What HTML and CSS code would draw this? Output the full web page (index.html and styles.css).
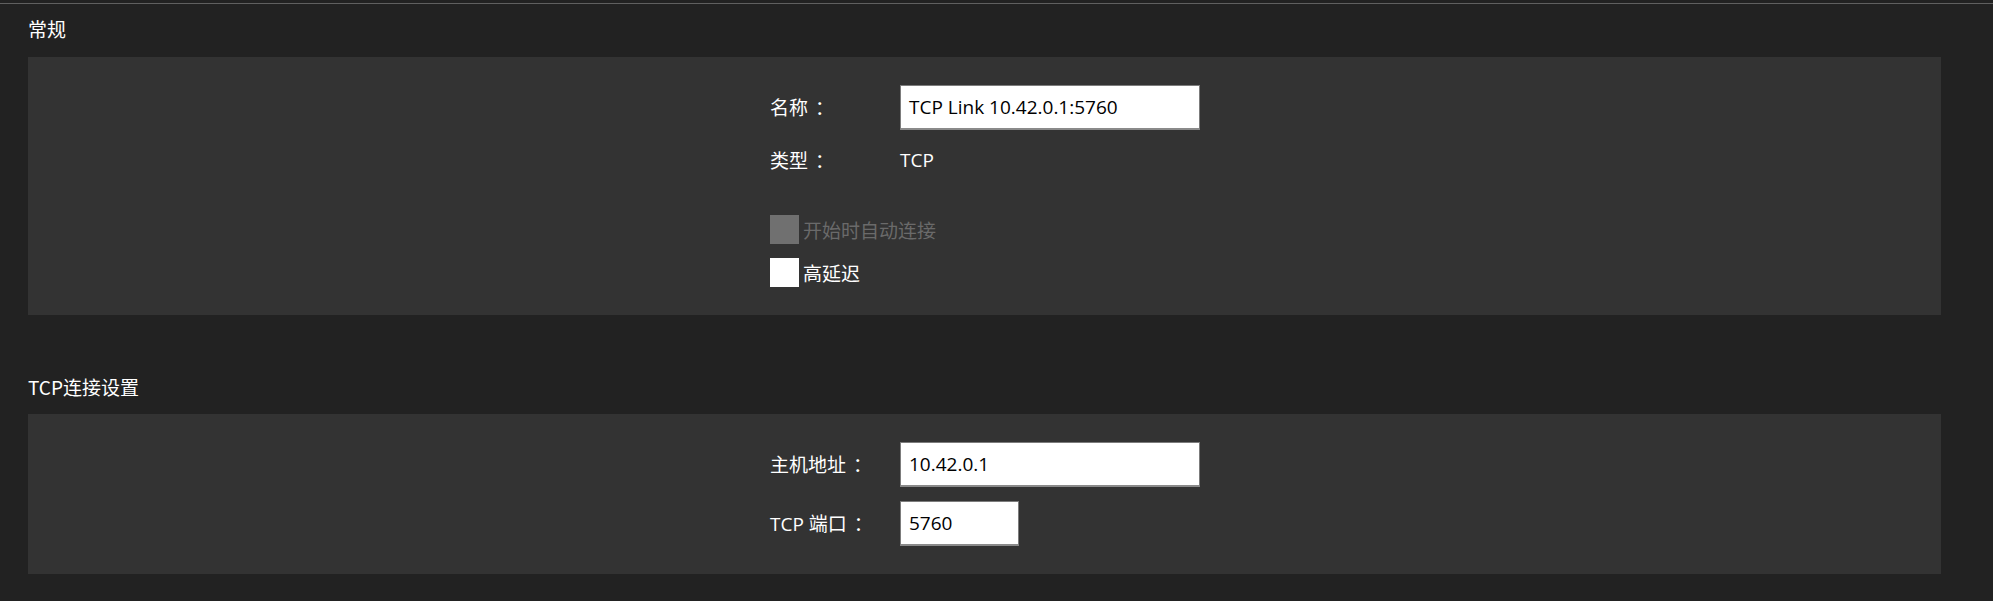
FILE: index.html
```html
<!DOCTYPE html>
<html lang="zh-CN">
<head>
<meta charset="utf-8">
<title>TCP Link</title>
<link rel="stylesheet" href="styles.css">
</head>
<body>
<div class="topbar"></div>
<div class="content">
  <div class="section-title title-general">常规</div>
  <div class="panel panel-general">
    <div class="form">
      <div class="row row-input">
        <span class="label">名称<span class="colon">：</span></span>
        <div class="input input-wide">TCP Link 10.42.0.1:5760</div>
      </div>
      <div class="row row-type">
        <span class="label">类型<span class="colon">：</span></span>
        <span class="value">TCP</span>
      </div>
      <div class="check check-first disabled">
        <span class="box box-disabled"></span>
        <span class="check-text">开始时自动连接</span>
      </div>
      <div class="check check-second">
        <span class="box box-white"></span>
        <span class="check-text">高延迟</span>
      </div>
    </div>
  </div>

  <div class="section-title title-tcp">TCP连接设置</div>
  <div class="panel panel-tcp">
    <div class="form">
      <div class="row row-input">
        <span class="label">主机地址<span class="colon">：</span></span>
        <div class="input input-wide">10.42.0.1</div>
      </div>
      <div class="row row-input row-gap">
        <span class="label">TCP 端口<span class="colon">：</span></span>
        <div class="input input-narrow">5760</div>
      </div>
    </div>
  </div>
</div>
</body>
</html>
```
FILE: styles.css
```css
html, body {
  margin: 0;
  padding: 0;
  background: #222222;
  width: 1993px;
  height: 601px;
  overflow: hidden;
}

body {
  font-family: "Open Sans", "Noto Sans CJK SC", sans-serif;
  color: #ffffff;
}

.topbar {
  height: 3px;
  border-bottom: 1px solid #606060;
  background: #222222;
}

.content {
  padding: 0 52px 0 28px;
}

.section-title {
  font-family: "Noto Sans CJK SC", sans-serif;
  font-size: 19px;
  line-height: 24px;
  color: #ffffff;
}

.title-general {
  margin-top: 13px;
  height: 40px;
}

.title-tcp {
  margin-top: 60px;
  height: 39px;
}

.panel {
  background: #333333;
  box-sizing: border-box;
  padding: 28px 0;
}

.panel-general {
  height: 258px;
}

.panel-tcp {
  height: 160px;
}

.form {
  margin-left: calc(50% - 214.5px);
  display: flex;
  flex-direction: column;
}

.row {
  display: flex;
  align-items: center;
}

.label {
  width: 130px;
  flex: none;
  font-family: "Open Sans", "Noto Sans CJK SC", sans-serif;
  font-size: 19px;
  line-height: 24px;
  color: #ffffff;
}

.colon {
  font-family: "Noto Sans CJK TC", sans-serif;
  padding-left: 7px;
}

.row-input {
  height: 45px;
}

.row-gap {
  margin-top: 14px;
}

.row-type {
  margin-top: 18px;
  height: 24px;
}

.value {
  font-size: 19px;
  line-height: 24px;
  color: #ffffff;
}

.input {
  box-sizing: border-box;
  height: 45px;
  background: #ffffff;
  border: 1px solid #7c7c7c;
  border-bottom: 2px solid #8a8a8a;
  color: #000000;
  font-family: "Open Sans", "Noto Sans CJK SC", sans-serif;
  font-size: 19px;
  line-height: 42px;
  padding-left: 8px;
  white-space: nowrap;
}

.input-wide {
  width: 300px;
}

.input-narrow {
  width: 119px;
}

.check {
  display: flex;
  align-items: center;
  height: 29px;
}

.check-first {
  margin-top: 43px;
}

.check-second {
  margin-top: 14px;
}

.box {
  width: 29px;
  height: 29px;
  flex: none;
}

.box-disabled {
  background: #707070;
}

.box-white {
  background: #ffffff;
}

.check-text {
  margin-left: 4px;
  font-family: "Noto Sans CJK SC", sans-serif;
  font-size: 19px;
  line-height: 24px;
  color: #ffffff;
}

.disabled .check-text {
  color: #6a6a6a;
}
```
